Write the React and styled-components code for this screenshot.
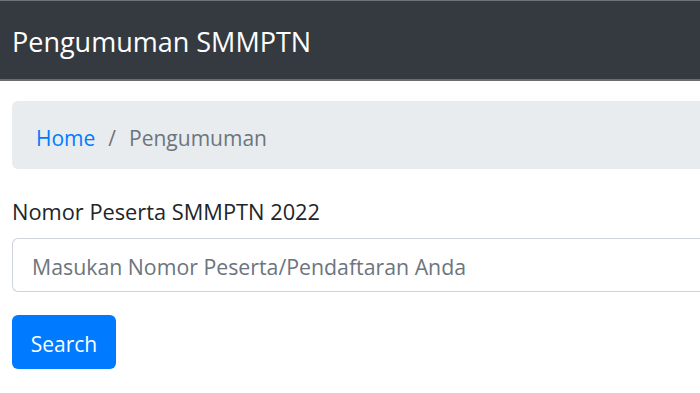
import React from "react";
import styled, { createGlobalStyle } from "styled-components";

const GlobalStyle = createGlobalStyle`
  html, body {
    margin: 0;
    padding: 0;
    background: #fff;
    overflow: hidden;
  }
  body {
    font-family: "Open Sans", "Noto Sans", sans-serif;
    color: #212529;
  }
  * { box-sizing: border-box; }
`;

const Page = styled.div`
  width: 700px;
  height: 393px;
  overflow: hidden;
`;

const Navbar = styled.nav`
  height: 81px;
  background: #343a40;
  border-top: 1px solid #6e7276;
  border-bottom: 2px solid #6b6e71;
  display: flex;
  align-items: center;
  padding: 3px 12px 0;
`;

const Brand = styled.a`
  color: #fff;
  font-size: 27px;
  line-height: 1;
  text-decoration: none;
  white-space: nowrap;
`;

const Main = styled.main`
  padding: 20px 0 0 12px;
`;

const Breadcrumb = styled.ol`
  list-style: none;
  margin: 0 0 25px;
  padding: 5px 22px 0 24px;
  height: 68px;
  width: 720px;
  display: flex;
  align-items: center;
  background: #e9ecef;
  border-radius: 6px 0 0 6px;
  font-size: 21px;
`;

const Crumb = styled.li`
  color: ${(p) => (p.$active ? "#6c757d" : "#007bff")};
  &:not(:first-child)::before {
    content: "/";
    color: #6c757d;
    padding: 0 13px;
  }
`;

const Label = styled.label`
  display: block;
  font-size: 21.8px;
  line-height: 32px;
  padding-top: 2px;
  margin-bottom: 10px;
  white-space: nowrap;
`;

const Input = styled.input`
  display: block;
  width: 720px;
  height: 54px;
  margin-bottom: 23px;
  padding: 2px 19px 0;
  font-family: inherit;
  font-size: 21.3px;
  color: #495057;
  border: 1px solid #ced4da;
  border-right: none;
  border-radius: 6px 0 0 6px;
  outline: none;
  &::placeholder {
    color: #6c757d;
    opacity: 1;
  }
`;

const Button = styled.button`
  width: 104px;
  height: 54px;
  background: #007bff;
  color: #fff;
  border: none;
  border-radius: 6px;
  font-family: inherit;
  font-size: 21px;
  padding: 3px 0 0;
`;

export default function App() {
  return (
    <Page>
      <GlobalStyle />
      <Navbar>
        <Brand href="#">Pengumuman SMMPTN</Brand>
      </Navbar>
      <Main>
        <Breadcrumb>
          <Crumb>Home</Crumb>
          <Crumb $active>Pengumuman</Crumb>
        </Breadcrumb>
        <form onSubmit={(e) => e.preventDefault()}>
          <Label htmlFor="nomor">Nomor Peserta SMMPTN 2022</Label>
          <Input id="nomor" placeholder="Masukan Nomor Peserta/Pendaftaran Anda" />
          <Button type="submit">Search</Button>
        </form>
      </Main>
    </Page>
  );
}
